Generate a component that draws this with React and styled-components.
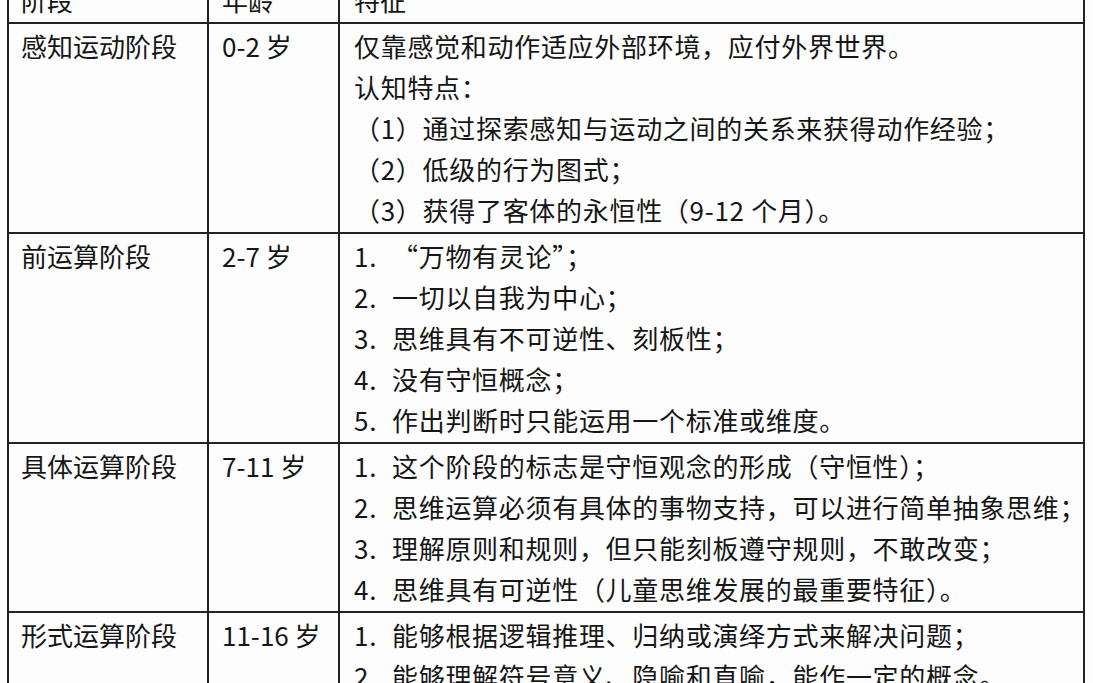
import React from "react";
import styled, { createGlobalStyle } from "styled-components";

const GlobalStyle = createGlobalStyle`
  html, body {
    margin: 0;
    padding: 0;
    background: #fdfdfd;
  }
`;

const Page = styled.div`
  width: 1093px;
  height: 683px;
  overflow: hidden;
  background: #fdfdfd;
  padding-left: 7px;
  box-sizing: border-box;
`;

const Table = styled.table`
  width: 1078px;
  margin-top: -24px;
  border-collapse: collapse;
  table-layout: fixed;
  font-family: "Noto Sans CJK SC", "Noto Sans", sans-serif;
  font-size: 26px;
  color: #161616;
`;

const Cell = styled.td`
  border: 2px solid #222;
  vertical-align: top;
  padding: 1px 0 2px ${(p) => p.$pad || 12}px;
  line-height: 41px;
  letter-spacing: ${(p) => p.$track || 0}px;
  white-space: nowrap;
  overflow: hidden;
`;

const Line = styled.div`
  display: flex;
`;

const Num = styled.span`
  width: 38px;
  flex: none;
`;

const stages = [
  {
    name: "感知运动阶段",
    age: "0-2 岁",
    plain: [
      "仅靠感觉和动作适应外部环境，应付外界世界。",
      "认知特点：",
      "（1）通过探索感知与运动之间的关系来获得动作经验；",
      "（2）低级的行为图式；",
      "（3）获得了客体的永恒性（9-12 个月）。",
    ],
  },
  {
    name: "前运算阶段",
    age: "2-7 岁",
    items: [
      "“万物有灵论”；",
      "一切以自我为中心；",
      "思维具有不可逆性、刻板性；",
      "没有守恒概念；",
      "作出判断时只能运用一个标准或维度。",
    ],
  },
  {
    name: "具体运算阶段",
    age: "7-11 岁",
    items: [
      "这个阶段的标志是守恒观念的形成（守恒性）；",
      "思维运算必须有具体的事物支持，可以进行简单抽象思维；",
      "理解原则和规则，但只能刻板遵守规则，不敢改变；",
      "思维具有可逆性（儿童思维发展的最重要特征）。",
    ],
  },
  {
    name: "形式运算阶段",
    age: "11-16 岁",
    items: [
      "能够根据逻辑推理、归纳或演绎方式来解决问题；",
      "能够理解符号意义、隐喻和直喻，能作一定的概念。",
    ],
  },
];

export default function App() {
  return (
    <>
      <GlobalStyle />
      <Page>
        <Table>
          <colgroup>
            <col style={{ width: 200 }} />
            <col style={{ width: 131 }} />
            <col />
          </colgroup>
          <tbody>
            <tr>
              <Cell>阶段</Cell>
              <Cell $pad={13}>年龄</Cell>
              <Cell $pad={14}>特征</Cell>
            </tr>
            {stages.map((s) => (
              <tr key={s.name}>
                <Cell>{s.name}</Cell>
                <Cell $pad={13}>{s.age}</Cell>
                <Cell $pad={14} $track={0.7}>
                  {s.plain &&
                    s.plain.map((t) => <Line key={t}>{t}</Line>)}
                  {s.items &&
                    s.items.map((t, i) => (
                      <Line key={t}>
                        <Num>{i + 1}.</Num>
                        {t}
                      </Line>
                    ))}
                </Cell>
              </tr>
            ))}
          </tbody>
        </Table>
      </Page>
    </>
  );
}
